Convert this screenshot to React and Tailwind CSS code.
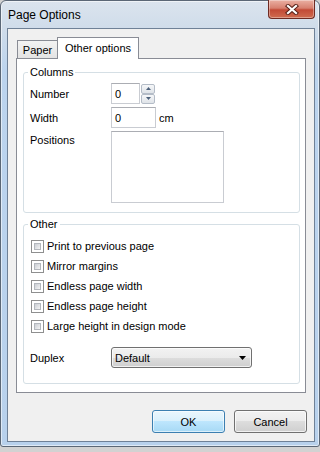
import React from "react";

const grayBtn =
  "bg-[linear-gradient(#f2f2f2,#ebebeb_50%,#dddddd_50%,#cfcfcf)] border border-[#707070] rounded-[3px] shadow-[inset_0_0_0_1px_rgba(255,255,255,0.7)]";

const CheckBox = () => (
  <span className="w-[13px] h-[13px] border border-[#8e8f8f] bg-white p-[2px] flex shrink-0">
    <span className="flex-1 bg-linear-to-br from-[#c9cdd3] to-[#f4f4f4] border border-[#b3b7bd]" />
  </span>
);

const TextBox = ({ value, className }) => (
  <div
    className={`h-[21px] bg-white border border-[#c9ccd2] border-t-[#abadb3] flex items-center pl-[3px] ${className}`}
  >
    {value}
  </div>
);

export default function App() {
  const options = [
    "Print to previous page",
    "Mirror margins",
    "Endless page width",
    "Endless page height",
    "Large height in design mode",
  ];

  return (
    <div className="w-[320px] h-[452px] bg-[#d2d2d2] font-['Liberation_Sans',Arial,sans-serif] text-[11px] leading-[14px] text-black overflow-hidden">
      {/* Window frame */}
      <div className="h-[447px] border border-[#5b6776] rounded-t-[6px] rounded-b-[3px] bg-[linear-gradient(#dbe4ee,#cfdcea_28px,#bcd4ee_70px,#b8d1ec)] shadow-[inset_0_0_0_1px_rgba(255,255,255,0.55)] flex flex-col pl-[6px] pr-[4px] pb-[4px]">
        {/* Title bar */}
        <div className="h-[27px] flex items-start justify-between">
          <div className="pl-[1px] pt-[6px] text-[12px] leading-[16px]">Page Options</div>
          <div className="mt-[-1px] w-[47px] h-[19px] rounded-b-[4px] border border-[#6e2a22] border-t-0 bg-[linear-gradient(#eab0a3,#d7806f_45%,#c24a36_55%,#cf6c50)] shadow-[inset_0_0_0_1px_rgba(255,255,255,0.35)] flex items-center justify-center">
            <svg width="14" height="11" viewBox="0 0 14 11">
              <path d="M3 2L11 9M11 2L3 9" stroke="#5a2219" strokeWidth="4.2" strokeLinecap="square" />
              <path d="M3 2L11 9M11 2L3 9" stroke="#ffffff" strokeWidth="2.2" strokeLinecap="square" />
            </svg>
          </div>
        </div>

        {/* Client area */}
        <div className="h-[414px] border border-[#6f8197] bg-[#f0f0f0] flex flex-col pl-[8px] pr-[8px] pt-[8px]">
          {/* Tabs */}
          <div className="h-[21px] flex items-end pl-[1px]">
            <div className="w-[41px] h-[18px] border border-b-0 border-[#898c95] bg-linear-to-b from-[#f3f3f3] to-[#e3e3e3] flex items-center justify-center">
              Paper
            </div>
            <div className="relative z-10 ml-[-1px] mb-[-1px] w-[82px] h-[22px] border border-b-0 border-[#898c95] bg-white flex items-center justify-center pb-[1px]">
              Other options
            </div>
          </div>

          {/* Tab panel */}
          <div className="w-[290px] h-[335px] border border-[#898c95] bg-white pl-[6px] pt-[6px] flex flex-col">
            {/* Columns */}
            <fieldset className="w-[277px] h-[148px] border border-[#d5dfe5] rounded-[3px] pl-[6px] pt-[4px]">
              <legend className="px-[2px] ml-[-2px] leading-[14px]">Columns</legend>
              <div className="flex items-center h-[21px]">
                <span className="w-[81px]">Number</span>
                <TextBox value="0" className="w-[29px]" />
                <div className="ml-[1px] flex flex-col">
                  <div className="w-[14px] h-[10px] border border-[#b4bcc7] rounded-[2px] bg-linear-to-b from-[#f6f7f9] to-[#dfe3e8] flex items-center justify-center">
                    <svg width="5" height="3" viewBox="0 0 5 3">
                      <path d="M0 3L2.5 0L5 3Z" fill="#4c607a" />
                    </svg>
                  </div>
                  <div className="w-[14px] h-[10px] border border-[#b4bcc7] rounded-[2px] bg-linear-to-b from-[#f6f7f9] to-[#dfe3e8] flex items-center justify-center">
                    <svg width="5" height="3" viewBox="0 0 5 3">
                      <path d="M0 0L5 0L2.5 3Z" fill="#4c607a" />
                    </svg>
                  </div>
                </div>
              </div>
              <div className="flex items-center h-[21px] mt-[3px]">
                <span className="w-[81px]">Width</span>
                <TextBox value="0" className="w-[45px]" />
                <span className="ml-[3px]">cm</span>
              </div>
              <div className="flex items-start mt-[3px]">
                <span className="w-[81px] pt-[2px]">Positions</span>
                <div className="w-[113px] h-[72px] bg-white border border-[#c9ccd2] border-t-[#abadb3]" />
              </div>
            </fieldset>

            {/* Other */}
            <fieldset className="mt-[4px] w-[277px] h-[167px] border border-[#d5dfe5] rounded-[3px] pl-[6px] pt-[5px]">
              <legend className="px-[2px] ml-[-2px] leading-[14px]">Other</legend>
              {options.map((label) => (
                <div key={label} className="h-[20px] flex items-center gap-[3px] pl-[1px]">
                  <CheckBox />
                  <span>{label}</span>
                </div>
              ))}
              <div className="mt-[11px] flex items-center h-[21px]">
                <span className="w-[81px]">Duplex</span>
                <div className={`w-[141px] h-[21px] flex items-center justify-between pl-[3px] pr-[5px] ${grayBtn}`}>
                  <span>Default</span>
                  <svg width="7" height="4" viewBox="0 0 7 4">
                    <path d="M0 0L7 0L3.5 4Z" fill="#000" />
                  </svg>
                </div>
              </div>
            </fieldset>
          </div>

          {/* Buttons */}
          <div className="mt-[17px] mr-[-1px] flex justify-end gap-[9px]">
            <button className="w-[73px] h-[23px] rounded-[3px] border border-[#3c7fb1] bg-[linear-gradient(#eaf6fd,#d9f0fc_50%,#bee6fd_50%,#a7d9f5)] shadow-[inset_0_0_0_1px_rgba(255,255,255,0.6)] flex items-center justify-center">
              OK
            </button>
            <button className={`w-[73px] h-[23px] flex items-center justify-center ${grayBtn}`}>
              Cancel
            </button>
          </div>
        </div>
      </div>
    </div>
  );
}
